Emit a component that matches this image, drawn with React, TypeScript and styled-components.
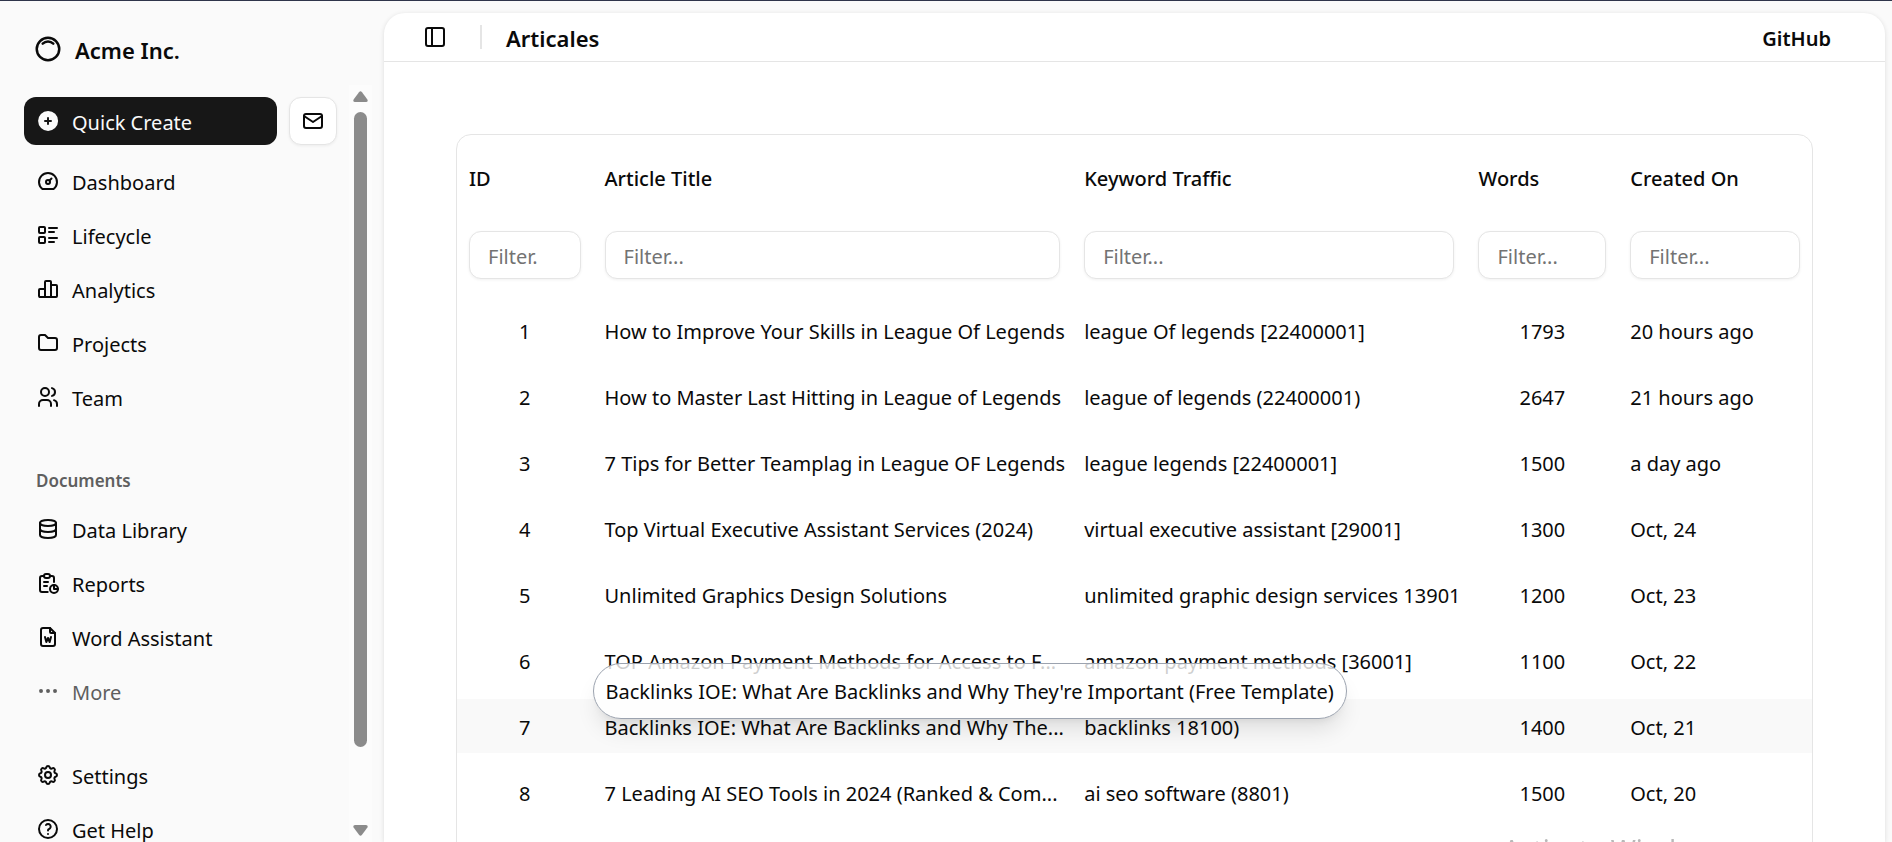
import React from "react";
import styled, { createGlobalStyle, css } from "styled-components";
import type { IconType } from "react-icons";
import { PanelLeft } from "lucide-react";
import {
  TbChartBar,
  TbCirclePlusFilled,
  TbDashboard,
  TbDatabase,
  TbDots,
  TbFileWord,
  TbFolder,
  TbHelp,
  TbInnerShadowTop,
  TbListDetails,
  TbMail,
  TbReport,
  TbSettings,
  TbUsers,
} from "react-icons/tb";

const color = {
  ink: "#0a0a0a",
  muted: "#737373",
  line: "#e5e5e5",
  shell: "#fafafa",
  primary: "#171717",
};

const GlobalStyle = createGlobalStyle`
  *, *::before, *::after { box-sizing: border-box; }
  body {
    margin: 0;
    background: ${color.shell};
    color: ${color.ink};
    font-family: "Segoe UI", "Noto Sans", "Open Sans", sans-serif;
    font-size: 20px;
    line-height: 30px;
  }
  button, input { font: inherit; color: inherit; }
`;

const Shell = styled.div`
  display: flex;
  height: 100vh;
  overflow: hidden;
  border-top: 1px solid #2f354b;
`;

const Sidebar = styled.aside`
  display: flex;
  flex-direction: column;
  flex: none;
  width: 384px;
  padding: 12px 12px 0;
`;

const Label = styled.span`
  padding-top: 3px;
`;

const Brand = styled.a`
  display: flex;
  align-items: center;
  gap: 12px;
  height: 48px;
  margin: 12px;
  padding: 0 9px;
  color: inherit;
  font-size: 22px;
  font-weight: 600;
  text-decoration: none;
`;

const BrandName = styled.span`
  padding-top: 1px;
`;

const SidebarScroll = styled.div`
  display: flex;
  flex: 1;
  min-height: 0;
`;

const SidebarBody = styled.div`
  flex: 1;
  overflow: hidden;
  padding: 12px;
`;

const CreateRow = styled.div`
  display: flex;
  gap: 12px;
  margin-bottom: 12px;
`;

const CreateButton = styled.button`
  display: flex;
  flex: 1;
  align-items: center;
  gap: 12px;
  height: 48px;
  padding: 0 12px;
  border: 0;
  border-radius: 12px;
  background: ${color.primary};
  color: ${color.shell};
`;

const MailButton = styled.button`
  display: grid;
  place-items: center;
  width: 48px;
  height: 48px;
  padding: 0;
  border: 1px solid ${color.line};
  border-radius: 12px;
  background: #fff;
  box-shadow: 0 1px 3px rgba(0, 0, 0, 0.06);
`;

const NavList = styled.ul`
  display: flex;
  flex-direction: column;
  gap: 6px;
  margin: 0 0 36px;
  padding: 0;
  list-style: none;
`;

const NavLink = styled.a<{ $muted?: boolean }>`
  display: flex;
  align-items: center;
  gap: 12px;
  height: 48px;
  padding: 0 12px;
  color: ${(p) => (p.$muted ? "#5f5f5f" : color.ink)};
  text-decoration: none;
`;

const GroupLabel = styled.h2`
  display: flex;
  align-items: center;
  height: 48px;
  margin: 0;
  padding: 0 12px;
  color: #5f5f5f;
  font-size: 17px;
  font-weight: 600;
`;

const ScrollTrack = styled.div`
  display: flex;
  flex-direction: column;
  align-items: center;
  flex: none;
  width: 23px;
  padding: 6px 0;
  background: #fcfcfc;
`;

const ScrollArrow = styled.svg`
  flex: none;
  width: 15px;
  height: 11px;
  fill: #8b8b8b;
`;

const ScrollRail = styled.div`
  flex: 1;
  width: 13px;
  margin: 10px 0 7px;
`;

const ScrollThumb = styled.div`
  height: 90%;
  border-radius: 7px;
  background: #8b8b8b;
`;

const Panel = styled.main`
  flex: 1;
  min-width: 0;
  margin: 12px 7px 0 0;
  border-radius: 21px 21px 0 0;
  background: #fff;
  box-shadow: 0 1px 5px rgba(0, 0, 0, 0.12);
`;

const PanelHeader = styled.header`
  display: flex;
  align-items: center;
  height: 49px;
  padding: 0 54px 0 36px;
  border-bottom: 1px solid ${color.line};
`;

const ToggleButton = styled.button`
  display: grid;
  place-items: center;
  width: 30px;
  height: 30px;
  padding: 0;
  border: 0;
  background: none;
`;

const Divider = styled.span`
  width: 2px;
  height: 24px;
  margin: 0 24px 0 30px;
  background: ${color.line};
`;

const PageTitle = styled.h1`
  flex: 1;
  margin: 0;
  padding-top: 1px;
  font-size: 22px;
  font-weight: 600;
`;

const HeaderLink = styled.a`
  padding-top: 3px;
  color: inherit;
  font-weight: 600;
  text-decoration: none;
`;

const TableCard = styled.section`
  margin: 72px 72px 0;
  padding-bottom: 66px;
  border: 1px solid ${color.line};
  border-radius: 15px;
`;

const Table = styled.table`
  width: 100%;
  border-spacing: 0 12px;
  table-layout: fixed;
`;

const HeadCell = styled.th`
  height: 60px;
  padding: 3px 12px 0;
  font-weight: 500;
  text-align: left;
`;

const FilterCell = styled.td`
  padding: 12px;
`;

const FilterInput = styled.input`
  display: block;
  width: 100%;
  height: 48px;
  padding: 2px 18px 0;
  border: 1px solid ${color.line};
  border-radius: 12px;
  background: #fff;
  box-shadow: 0 1px 3px rgba(0, 0, 0, 0.06);

  &::placeholder {
    color: ${color.muted};
    opacity: 1;
  }
`;

const Row = styled.tr<{ $active?: boolean }>`
  ${(p) =>
    p.$active &&
    css`
      background: #f9f9f9;
    `}
`;

const Cell = styled.td<{ $center?: boolean }>`
  position: relative;
  height: 54px;
  padding: 3px 12px 0;
  text-align: ${(p) => (p.$center ? "center" : "left")};
  white-space: nowrap;
`;

const Tooltip = styled.div`
  position: absolute;
  z-index: 1;
  top: -36px;
  left: 0;
  padding: 13px 12px 11px;
  border: 1px solid #9ca3af;
  border-radius: 28px;
  background: rgba(255, 255, 255, 0.8);
  box-shadow: 0 15px 22px -4px rgba(0, 0, 0, 0.1), 0 6px 9px -6px rgba(0, 0, 0, 0.1);
`;

const Watermark = styled.div`
  position: fixed;
  right: 166px;
  bottom: -28px;
  color: #b8b8b8;
  font-size: 27px;
  line-height: 40px;
  pointer-events: none;
`;

type NavEntry = { label: string; icon: IconType; muted?: boolean };

const mainNav: NavEntry[] = [
  { label: "Dashboard", icon: TbDashboard },
  { label: "Lifecycle", icon: TbListDetails },
  { label: "Analytics", icon: TbChartBar },
  { label: "Projects", icon: TbFolder },
  { label: "Team", icon: TbUsers },
];

const documentNav: NavEntry[] = [
  { label: "Data Library", icon: TbDatabase },
  { label: "Reports", icon: TbReport },
  { label: "Word Assistant", icon: TbFileWord },
  { label: "More", icon: TbDots, muted: true },
];

const supportNav: NavEntry[] = [
  { label: "Settings", icon: TbSettings },
  { label: "Get Help", icon: TbHelp },
];

const columns = [
  { label: "ID", width: "10%", placeholder: "Filter." },
  { label: "Article Title", width: "35.4%", placeholder: "Filter..." },
  { label: "Keyword Traffic", width: "29.1%", placeholder: "Filter..." },
  { label: "Words", width: "11.2%", placeholder: "Filter..." },
  { label: "Created On", width: "14.3%", placeholder: "Filter..." },
];

type Article = { title: string; keyword: string; words: number; created: string; fullTitle?: string };

const articles: Article[] = [
  { title: "How to Improve Your Skills in League Of Legends", keyword: "league Of legends [22400001]", words: 1793, created: "20 hours ago" },
  { title: "How to Master Last Hitting in League of Legends", keyword: "league of legends (22400001)", words: 2647, created: "21 hours ago" },
  { title: "7 Tips for Better Teamplag in League OF Legends", keyword: "league legends [22400001]", words: 1500, created: "a day ago" },
  { title: "Top Virtual Executive Assistant Services (2024)", keyword: "virtual executive assistant [29001]", words: 1300, created: "Oct, 24" },
  { title: "Unlimited Graphics Design Solutions", keyword: "unlimited graphic design services 13901", words: 1200, created: "Oct, 23" },
  { title: "TOP Amazon Payment Methods for Access to F...", keyword: "amazon payment methods [36001]", words: 1100, created: "Oct, 22" },
  {
    title: "Backlinks IOE: What Are Backlinks and Why The...",
    fullTitle: "Backlinks IOE: What Are Backlinks and Why They're Important (Free Template)",
    keyword: "backlinks 18100)",
    words: 1400,
    created: "Oct, 21",
  },
  { title: "7 Leading AI SEO Tools in 2024 (Ranked & Com...", keyword: "ai seo software (8801)", words: 1500, created: "Oct, 20" },
];

function NavGroup({ items }: { items: NavEntry[] }) {
  return (
    <NavList>
      {items.map(({ label, icon: Icon, muted }) => (
        <li key={label}>
          <NavLink href="#" $muted={muted}>
            <Icon size={24} aria-hidden />
            <Label>{label}</Label>
          </NavLink>
        </li>
      ))}
    </NavList>
  );
}

export default function App() {
  return (
    <>
      <GlobalStyle />
      <Shell>
        <Sidebar>
          <Brand href="#">
            <TbInnerShadowTop size={30} aria-hidden />
            <BrandName>Acme Inc.</BrandName>
          </Brand>
          <SidebarScroll>
            <SidebarBody>
              <CreateRow>
                <CreateButton type="button">
                  <TbCirclePlusFilled size={24} aria-hidden />
                  <Label>Quick Create</Label>
                </CreateButton>
                <MailButton type="button" aria-label="Inbox">
                  <TbMail size={24} aria-hidden />
                </MailButton>
              </CreateRow>
              <NavGroup items={mainNav} />
              <GroupLabel>Documents</GroupLabel>
              <NavGroup items={documentNav} />
              <NavGroup items={supportNav} />
            </SidebarBody>
            <ScrollTrack aria-hidden>
              <ScrollArrow viewBox="0 0 15 11">
                <path d="M6 1.2Q7.5 -.6 9 1.2L14.4 8.5Q15.4 10.8 13 11H2Q-.4 10.8 .6 8.5Z" />
              </ScrollArrow>
              <ScrollRail>
                <ScrollThumb />
              </ScrollRail>
              <ScrollArrow viewBox="0 0 15 11">
                <path d="M6 9.8Q7.5 11.6 9 9.8L14.4 2.5Q15.4 .2 13 0H2Q-.4 .2 .6 2.5Z" />
              </ScrollArrow>
            </ScrollTrack>
          </SidebarScroll>
        </Sidebar>
        <Panel>
          <PanelHeader>
            <ToggleButton type="button" aria-label="Toggle sidebar">
              <PanelLeft size={24} aria-hidden />
            </ToggleButton>
            <Divider />
            <PageTitle>Articales</PageTitle>
            <HeaderLink href="#">GitHub</HeaderLink>
          </PanelHeader>
          <TableCard>
            <Table>
              <colgroup>
                {columns.map((c) => (
                  <col key={c.label} style={{ width: c.width }} />
                ))}
              </colgroup>
              <thead>
                <tr>
                  {columns.map((c) => (
                    <HeadCell key={c.label} scope="col">
                      {c.label}
                    </HeadCell>
                  ))}
                </tr>
                <tr>
                  {columns.map((c) => (
                    <FilterCell key={c.label}>
                      <FilterInput type="text" placeholder={c.placeholder} aria-label={`Filter ${c.label}`} />
                    </FilterCell>
                  ))}
                </tr>
              </thead>
              <tbody>
                {articles.map((a, i) => (
                  <Row key={a.title} $active={Boolean(a.fullTitle)}>
                    <Cell $center>{i + 1}</Cell>
                    <Cell>
                      {a.title}
                      {a.fullTitle && <Tooltip role="tooltip">{a.fullTitle}</Tooltip>}
                    </Cell>
                    <Cell>{a.keyword}</Cell>
                    <Cell $center>{a.words}</Cell>
                    <Cell>{a.created}</Cell>
                  </Row>
                ))}
              </tbody>
            </Table>
          </TableCard>
        </Panel>
      </Shell>
      <Watermark>Activate Windows</Watermark>
    </>
  );
}
